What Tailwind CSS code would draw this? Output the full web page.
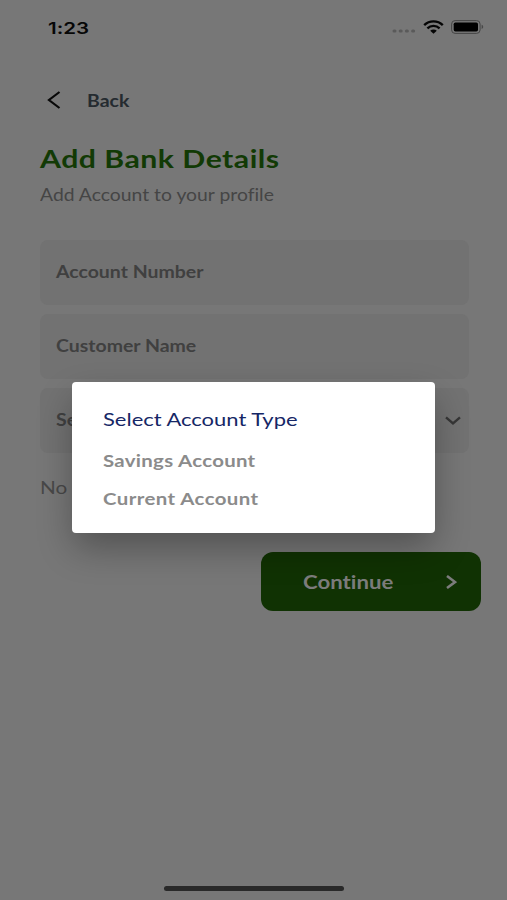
<!DOCTYPE html>
<html lang="en">
<head>
<meta charset="utf-8">
<title>Add Bank Details</title>
<script src="https://cdn.jsdelivr.net/npm/@tailwindcss/browser@4"></script>
</head>
<body class="bg-[#777777]">
<div class="relative flex h-[900px] w-[507px] flex-col overflow-hidden bg-[#777777] font-['Lato',sans-serif] [font-variant-ligatures:none]">
  <header class="flex h-[54px] shrink-0 items-center justify-between pl-12 pr-[23px]">
    <span class="origin-left scale-x-[1.28] pt-px font-['Inter',sans-serif] text-base font-semibold leading-5 text-[#070707]">1:23</span>
    <div class="flex items-center">
      <svg class="mr-[7px] mt-2" width="24" height="4" viewBox="0 0 24 4" fill="#5a5a5a"><rect x="0.5" y="0.5" width="4" height="3" rx="1.5"/><rect x="6.7" y="0.5" width="4" height="3" rx="1.5"/><rect x="12.9" y="0.5" width="4" height="3" rx="1.5"/><rect x="19.1" y="0.5" width="4" height="3" rx="1.5"/></svg>
      <svg class="mr-[7px]" width="21" height="14" viewBox="0 0 21 14" fill="none" stroke="#050505" stroke-width="2.4"><path d="M1.2 5.1C6.4 .1 14.6 .1 19.8 5.1M4.4 8.3C7.8 5.1 13.2 5.1 16.6 8.3"/><path d="M7.2 10.7C9 9 12 9 13.8 10.7L10.5 13.7Z" fill="#050505" stroke="none"/></svg>
      <svg width="33" height="14" viewBox="0 0 33 14"><rect x=".6" y=".6" width="28.5" height="12.8" rx="3.5" fill="none" stroke="#454545"/><rect x="2.7" y="2.6" width="24.3" height="8.8" rx="1.7" fill="#000"/><path d="M30.6 4.8C32.7 5.4 32.7 8.4 30.6 9Z" fill="#484848"/></svg>
    </div>
  </header>

  <nav class="mt-[34px] flex h-6 shrink-0 items-center pl-[47px]">
    <svg width="14" height="18" viewBox="0 0 14 18" fill="none" stroke="#080808" stroke-width="2.2"><path d="M12.5 1L2 9L12.5 17"/></svg>
    <span class="ml-[26px] origin-left scale-x-[1.18] pt-[2px] text-[16.5px] font-bold leading-6 text-[#252b30]">Back</span>
  </nav>

  <main class="flex flex-col pl-10">
    <h1 class="mt-[30px] w-max origin-left scale-x-[1.21] text-[25px] font-bold leading-8 tracking-[0.4px] text-[#123a05]">Add Bank Details</h1>
    <p class="mt-[9px] w-max origin-left scale-x-[1.172] text-[16.5px] leading-6 text-[#454545]">Add Account to your profile</p>
    <div class="mt-[33px] flex w-[429px] flex-col gap-[9px]">
      <div class="flex h-[65px] items-center rounded-lg bg-[#727272] pl-4">
        <span class="origin-left scale-x-[1.18] pb-[2px] text-[16.5px] font-bold leading-6 text-[#404040]">Account Number</span>
      </div>
      <div class="flex h-[65px] items-center rounded-lg bg-[#727272] pl-4">
        <span class="origin-left scale-x-[1.18] pb-[2px] text-[16.5px] font-bold leading-6 text-[#404040]">Customer Name</span>
      </div>
      <div class="flex h-[65px] items-center justify-between rounded-lg bg-[#727272] pl-4 pr-2">
        <span class="origin-left scale-x-[1.18] pb-px text-[16.5px] font-bold leading-6 text-[#404040]">Select</span>
        <svg width="16" height="9" viewBox="0 0 16 9" fill="none" stroke="#363636" stroke-width="2.4"><path d="M1 1.3L8 7.3L15 1.3"/></svg>
      </div>
    </div>
    <p class="mt-[22px] w-max origin-left scale-x-[1.15] text-[18px] leading-6 text-[#484848]">No</p>
    <button class="ml-[221px] mt-[53px] flex h-[59px] w-[220px] items-center justify-between rounded-xl bg-[#103203] pl-[42px] pr-[24px]">
      <span class="origin-left scale-x-[1.2] text-[18.5px] font-bold leading-6 text-[#7c7c7c]">Continue</span>
      <svg width="11" height="14" viewBox="0 0 11 14" fill="none" stroke="#7c7c7c" stroke-width="2.6"><path d="M1 1L9 7L1 13"/></svg>
    </button>
  </main>

  <div class="absolute bottom-[9px] left-[164px] h-[5px] w-[180px] rounded-full bg-[#292929]"></div>

  <section class="absolute left-[72px] top-[382px] flex h-[151px] w-[363px] flex-col rounded-[4px] bg-white pl-[31px] pt-[25px] shadow-[0_16px_36px_-2px_rgba(0,0,0,0.32)]">
    <h2 class="w-max origin-left scale-x-[1.22] text-[18px] leading-6 text-[#162766]">Select Account Type</h2>
    <div class="mt-[18px] w-max origin-left scale-x-[1.2] text-[17px] font-bold leading-6 tracking-[0.25px] text-[#8b8b8b]">Savings Account</div>
    <div class="mt-[14px] w-max origin-left scale-x-[1.2] text-[17px] font-bold leading-6 tracking-[0.35px] text-[#8b8b8b]">Current Account</div>
  </section>
</div>
</body>
</html>
